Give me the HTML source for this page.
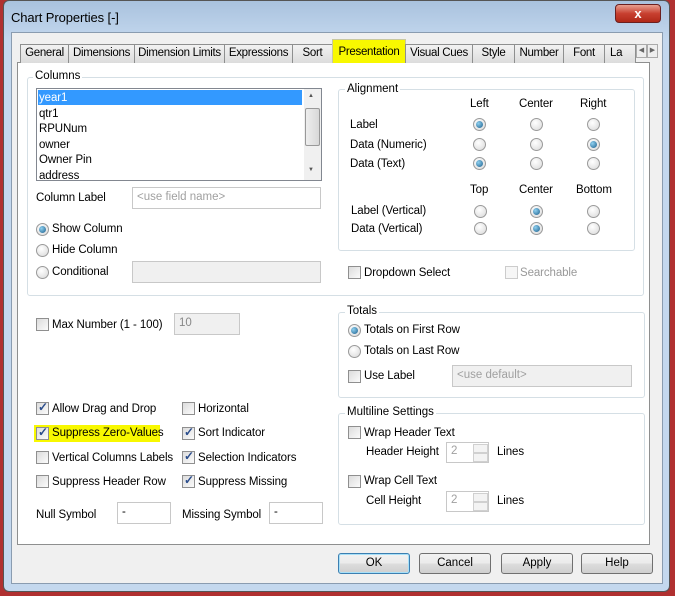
<!DOCTYPE html>
<html><head><meta charset="utf-8"><style>
*{box-sizing:border-box;margin:0;padding:0}
body{width:675px;height:596px;overflow:hidden;background:#b03030;font-family:"Liberation Sans",sans-serif;font-size:11.5px;color:#000;position:relative}
.a{position:absolute}
.t{position:absolute;white-space:nowrap;line-height:14px;letter-spacing:-0.1px}
.frame{left:3px;top:0;width:667px;height:592px;background:linear-gradient(#a9c2de,#c4d8ee 40px,#c4d8ee);border:1px solid #555;border-radius:6px}
.content{left:11px;top:32px;width:652px;height:552px;background:#f0f0f0;border:1px solid #8a9cb0}
.pane{left:17px;top:62px;width:633px;height:483px;background:#fff;border:1px solid #8e8f8f}
.tab{position:absolute;top:44px;height:19px;background:linear-gradient(#f2f2f2,#dcdcdc);border:1px solid #8e8f8f;border-bottom:none;text-align:center;line-height:17px;white-space:nowrap;overflow:hidden;letter-spacing:-0.3px}
.grp{position:absolute;border:1px solid #d5dfe5;border-radius:3px}
.gl{position:absolute;background:#fff;padding:0 2px;line-height:13px}
.cb{position:absolute;width:13px;height:13px;border:1px solid #8f8f8f;background:linear-gradient(135deg,#dcdcdc,#fbfbfb)}
.cb.on::after{content:"✓";position:absolute;left:1px;top:-3px;font-size:12px;color:#2b4d8c;font-weight:bold}
.rb{position:absolute;width:13px;height:13px;border-radius:50%;border:1px solid #9a9a9a;background:radial-gradient(circle at 40% 35%,#fff,#d8d8d8)}
.rb.on::after{content:"";position:absolute;left:2px;top:2px;width:7px;height:7px;border-radius:50%;background:radial-gradient(circle at 35% 35%,#8fd0f0,#1c5f8c)}
.in{position:absolute;border:1px solid #c8c8c8;background:#fff;color:#a0a0a0;padding:2px 4px;line-height:14px}
.dis{background:#f0f0f0}
.btn{position:absolute;top:553px;height:21px;width:72px;border:1px solid #707070;border-radius:3px;background:linear-gradient(#f2f2f2,#ebebeb 50%,#dddddd 51%,#cfcfcf);text-align:center;line-height:19px}
.spin{position:absolute;width:43px;height:21px;border:1px solid #c8c8c8;background:#fff;color:#a0a0a0;padding:2px 4px}
.spin i{position:absolute;right:0;width:15px;height:9px;border:1px solid #d0d0d0;background:#f3f3f3}
</style></head><body>
<div class="a frame"></div>
<div class="t" style="left:11px;top:11px;font-size:13px">Chart Properties [-]</div>
<div class="a" style="left:615px;top:4px;width:46px;height:19px;border-radius:4px;border:1px solid #6b2020;background:linear-gradient(#e8a090,#c84030 50%,#b02818);color:#fff;text-align:center;font-weight:bold;font-size:13px;line-height:17px">x</div>
<div class="a content"></div>
<div class="a pane"></div>
<div class="tab" style="left:20px;width:49px">General</div>
<div class="tab" style="left:68px;width:67px">Dimensions</div>
<div class="tab" style="left:134px;width:91px">Dimension Limits</div>
<div class="tab" style="left:224px;width:69px">Expressions</div>
<div class="tab" style="left:292px;width:41px">Sort</div>
<div class="tab" style="left:332px;top:39px;height:24px;width:74px;background:#f8f800;border-color:#c8c8a0;line-height:24px">Presentation</div>
<div class="tab" style="left:405px;width:68px">Visual Cues</div>
<div class="tab" style="left:472px;width:43px">Style</div>
<div class="tab" style="left:514px;width:50px">Number</div>
<div class="tab" style="left:563px;width:42px">Font</div>
<div class="tab" style="left:604px;width:32px;text-align:left;padding-left:5px">La</div>
<div class="a" style="left:636px;top:44px;width:11px;height:14px;border:1px solid #aaa;background:#eee;font-size:7px;text-align:center;line-height:12px;color:#666">◀</div>
<div class="a" style="left:647px;top:44px;width:11px;height:14px;border:1px solid #aaa;background:#eee;font-size:7px;text-align:center;line-height:12px;color:#666">▶</div>

<div class="grp" style="left:27px;top:77px;width:617px;height:219px"></div>
<div class="gl" style="left:33px;top:70px">Columns</div>
<div class="a" style="left:36px;top:88px;width:286px;height:93px;border:1px solid #828790;background:#fff;overflow:hidden">
 <div class="a" style="left:1px;top:1px;width:264px;height:15px;background:#3399ff"></div>
 <div class="t" style="left:2px;top:2px;color:#fff">year1</div>
 <div class="t" style="left:2px;top:18px">qtr1</div>
 <div class="t" style="left:2px;top:33px">RPUNum</div>
 <div class="t" style="left:2px;top:49px">owner</div>
 <div class="t" style="left:2px;top:64px">Owner Pin</div>
 <div class="t" style="left:2px;top:80px">address</div>
 <div class="a" style="left:267px;top:0;width:17px;height:91px;background:#f0f0f0"></div>
 <div class="a" style="left:271px;top:4px;font-size:6px;color:#555">▲</div>
 <div class="a" style="left:271px;top:78px;font-size:6px;color:#555">▼</div>
 <div class="a" style="left:268px;top:19px;width:15px;height:38px;border:1px solid #999;border-radius:2px;background:linear-gradient(90deg,#eee,#d8d8d8)"></div>
</div>
<div class="t" style="left:36px;top:191px">Column Label</div>
<div class="in" style="left:132px;top:187px;width:189px;height:22px">&lt;use field name&gt;</div>
<div class="rb on" style="left:36px;top:223px"></div><div class="t" style="left:52px;top:222px">Show Column</div>
<div class="rb" style="left:36px;top:244px"></div><div class="t" style="left:52px;top:243px">Hide Column</div>
<div class="rb" style="left:36px;top:266px"></div><div class="t" style="left:52px;top:265px">Conditional</div>
<div class="in dis" style="left:132px;top:261px;width:189px;height:22px"></div>

<div class="grp" style="left:338px;top:89px;width:297px;height:162px"></div>
<div class="gl" style="left:345px;top:83px">Alignment</div>
<div class="t" style="left:470px;top:97px">Left</div><div class="t" style="left:519px;top:97px">Center</div><div class="t" style="left:580px;top:97px">Right</div>
<div class="t" style="left:350px;top:118px">Label</div>
<div class="t" style="left:350px;top:138px">Data (Numeric)</div>
<div class="t" style="left:350px;top:157px">Data (Text)</div>
<div class="rb on" style="left:473px;top:118px"></div><div class="rb" style="left:530px;top:118px"></div><div class="rb" style="left:587px;top:118px"></div>
<div class="rb" style="left:473px;top:138px"></div><div class="rb" style="left:530px;top:138px"></div><div class="rb on" style="left:587px;top:138px"></div>
<div class="rb on" style="left:473px;top:157px"></div><div class="rb" style="left:530px;top:157px"></div><div class="rb" style="left:587px;top:157px"></div>
<div class="t" style="left:470px;top:183px">Top</div><div class="t" style="left:519px;top:183px">Center</div><div class="t" style="left:576px;top:183px">Bottom</div>
<div class="t" style="left:351px;top:204px">Label (Vertical)</div>
<div class="t" style="left:351px;top:222px">Data (Vertical)</div>
<div class="rb" style="left:474px;top:205px"></div><div class="rb on" style="left:530px;top:205px"></div><div class="rb" style="left:587px;top:205px"></div>
<div class="rb" style="left:474px;top:222px"></div><div class="rb on" style="left:530px;top:222px"></div><div class="rb" style="left:587px;top:222px"></div>
<div class="cb" style="left:348px;top:266px"></div><div class="t" style="left:364px;top:266px">Dropdown Select</div>
<div class="cb" style="left:505px;top:266px;border-color:#ccc;background:#f6f6f6"></div><div class="t" style="left:520px;top:266px;color:#999">Searchable</div>

<div class="cb" style="left:36px;top:318px"></div><div class="t" style="left:52px;top:318px">Max Number (1 - 100)</div>
<div class="in dis" style="left:174px;top:313px;width:66px;height:22px;color:#888">10</div>

<div class="grp" style="left:338px;top:312px;width:307px;height:86px"></div>
<div class="gl" style="left:345px;top:305px">Totals</div>
<div class="rb on" style="left:348px;top:324px"></div><div class="t" style="left:364px;top:323px">Totals on First Row</div>
<div class="rb" style="left:348px;top:345px"></div><div class="t" style="left:364px;top:344px">Totals on Last Row</div>
<div class="cb" style="left:348px;top:370px"></div><div class="t" style="left:364px;top:369px">Use Label</div>
<div class="in dis" style="left:452px;top:365px;width:180px;height:22px">&lt;use default&gt;</div>

<div class="a" style="left:34px;top:425px;width:126px;height:17px;background:#f8f800"></div>
<div class="cb on" style="left:36px;top:402px"></div><div class="t" style="left:52px;top:402px">Allow Drag and Drop</div>
<div class="cb on" style="left:36px;top:427px"></div><div class="t" style="left:52px;top:426px">Suppress Zero-Values</div>
<div class="cb" style="left:36px;top:451px"></div><div class="t" style="left:52px;top:451px">Vertical Columns Labels</div>
<div class="cb" style="left:36px;top:475px"></div><div class="t" style="left:52px;top:475px">Suppress Header Row</div>
<div class="cb" style="left:182px;top:402px"></div><div class="t" style="left:198px;top:402px">Horizontal</div>
<div class="cb on" style="left:182px;top:427px"></div><div class="t" style="left:198px;top:426px">Sort Indicator</div>
<div class="cb on" style="left:182px;top:451px"></div><div class="t" style="left:198px;top:451px">Selection Indicators</div>
<div class="cb on" style="left:182px;top:475px"></div><div class="t" style="left:198px;top:475px">Suppress Missing</div>
<div class="t" style="left:36px;top:508px">Null Symbol</div>
<div class="in" style="left:117px;top:502px;width:54px;height:22px;color:#000">-</div>
<div class="t" style="left:182px;top:508px">Missing Symbol</div>
<div class="in" style="left:269px;top:502px;width:54px;height:22px;color:#000">-</div>

<div class="grp" style="left:338px;top:413px;width:307px;height:112px"></div>
<div class="gl" style="left:345px;top:406px">Multiline Settings</div>
<div class="cb" style="left:348px;top:426px"></div><div class="t" style="left:364px;top:426px">Wrap Header Text</div>
<div class="t" style="left:366px;top:445px">Header Height</div>
<div class="spin" style="left:446px;top:442px">2<i style="top:1px"></i><i style="top:10px"></i></div>
<div class="t" style="left:497px;top:445px">Lines</div>
<div class="cb" style="left:348px;top:475px"></div><div class="t" style="left:364px;top:474px">Wrap Cell Text</div>
<div class="t" style="left:366px;top:494px">Cell Height</div>
<div class="spin" style="left:446px;top:491px">2<i style="top:1px"></i><i style="top:10px"></i></div>
<div class="t" style="left:497px;top:494px">Lines</div>

<div class="btn" style="left:338px;border-color:#3c7fb1;box-shadow:inset 0 0 0 1px #a8e0f8">OK</div>
<div class="btn" style="left:419px">Cancel</div>
<div class="btn" style="left:501px">Apply</div>
<div class="btn" style="left:581px">Help</div>
</body></html>
